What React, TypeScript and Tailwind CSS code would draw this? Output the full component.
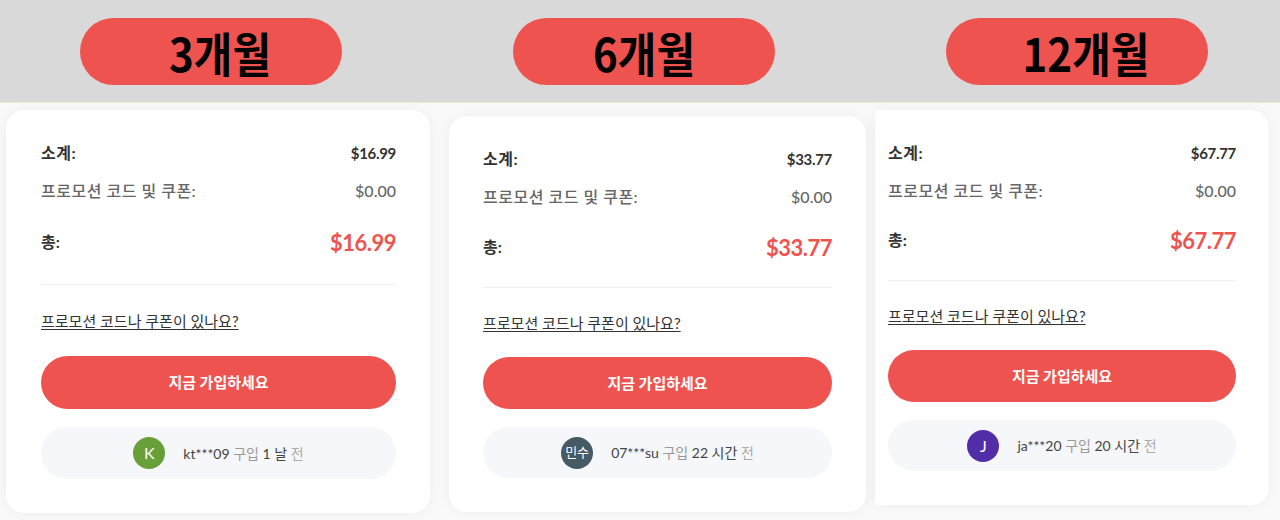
const plans = [
  {
    sub: '$16.99',
    avatar: 'K',
    avatarBg: 'bg-[#689f38]',
    user: 'kt***09',
    when: '1 날',
  },
  {
    sub: '$33.77',
    avatar: '민수',
    avatarBg: 'bg-[#455a64]',
    user: '07***su',
    when: '22 시간',
  },
  {
    sub: '$67.77',
    avatar: 'J',
    avatarBg: 'bg-[#512da8]',
    user: 'ja***20',
    when: '20 시간',
  },
];

type Plan = (typeof plans)[number];

// card 1 was captured a touch larger than the other two
const spacing = {
  loose: {
    total: 'mt-[26px]',
    line: 'mt-[27px]',
    link: 'mt-[26px]',
    button: 'mt-[25px] h-[53px]',
    pill: 'mt-[18px] h-[52px]',
  },
  normal: {
    total: 'mt-[25px]',
    line: 'mt-[25px]',
    link: 'mt-[25px]',
    button: 'mt-[24px] h-[52px]',
    pill: 'mt-[18px] h-[51px]',
  },
  tight: {
    total: 'mt-[24px]',
    line: 'mt-[25px]',
    link: 'mt-[25px]',
    button: 'mt-[24px] h-[52px]',
    pill: 'mt-[18px] h-[51px]',
  },
};

function Label({ text, className }: { text: string; className: string }) {
  return (
    <div className={`flex h-[67px] w-[262px] items-center justify-center rounded-full bg-[#ef5350] ${className}`}>
      <span className="inline-block scale-y-110 font-['Noto_Sans_CJK_KR',sans-serif] text-[42px] font-bold leading-none text-black">
        {text}
      </span>
    </div>
  );
}

function Card({ plan, size, className }: { plan: Plan; size: keyof typeof spacing; className: string }) {
  const s = spacing[size];
  const small = plan.avatar.length > 1;
  return (
    <div className={`bg-white pt-[33px] pb-[34px] shadow-[0_0_14px_rgba(0,0,0,0.05)] ${className}`}>
      <div className="flex h-[20px] items-center justify-between font-bold text-[#333]">
        <span className="text-[16px] tracking-[0.5px]">소계:</span>
        <span className="text-[15px] tracking-[-0.3px]">{plan.sub}</span>
      </div>
      <div className="mt-[18px] flex h-[20px] items-center justify-between font-medium text-[#666]">
        <span className="text-[16px] tracking-[0.5px]">프로모션 코드 및 쿠폰:</span>
        <span className="text-[16px]">$0.00</span>
      </div>
      <div className={`flex h-[30px] items-center justify-between ${s.total}`}>
        <span className="text-[16px] font-bold text-[#333]">총:</span>
        <span className="text-[22px] font-bold tracking-[-0.5px] text-[#ef5350]">{plan.sub}</span>
      </div>
      <div className={`h-px bg-[#f0f0f0] ${s.line}`} />
      <div className={`flex h-[20px] items-center ${s.link}`}>
        <a href="#" className="text-[15px] text-[#333] underline underline-offset-2">
          프로모션 코드나 쿠폰이 있나요?
        </a>
      </div>
      <button className={`flex w-full items-center justify-center rounded-full bg-[#ef5350] text-[15px] font-bold text-white ${s.button}`}>
        지금 가입하세요
      </button>
      <div className={`flex items-center justify-center gap-[18px] rounded-full bg-[#f5f7fb] ${s.pill}`}>
        <div className={`flex h-[32px] w-[32px] items-center justify-center rounded-full text-white ${plan.avatarBg} ${small ? 'text-[13px]' : 'text-[16px]'}`}>
          {plan.avatar}
        </div>
        <div className="text-[14px] text-[#444]">
          {plan.user} <span className="text-[#999]">구입</span> {plan.when} <span className="text-[#aaa]">전</span>
        </div>
      </div>
    </div>
  );
}

export default function App() {
  return (
    <div className="h-[520px] w-[1280px] overflow-hidden bg-[#f9f9f9] font-[Lato,'Noto_Sans_CJK_KR',sans-serif]">
      <div className="flex h-[103px] items-start border-b border-[#e6efcf] bg-[#d9d9d9] pt-[18px]">
        <Label text="3개월" className="ml-[80px] pl-[18px]" />
        <Label text="6개월" className="ml-[171px]" />
        <Label text="12개월" className="ml-[171px] pl-[18px]" />
      </div>
      <div className="flex">
        <div className="w-[440px]">
          <Card plan={plans[0]} size="loose" className="mt-[7px] ml-[6px] w-[424px] rounded-[18px] pl-[35px] pr-[34px]" />
        </div>
        <div className="w-[434px]">
          <Card plan={plans[1]} size="normal" className="mt-[13px] ml-[9px] w-[417px] rounded-[18px] px-[34px]" />
        </div>
        <div className="w-[406px]">
          <Card plan={plans[2]} size="tight" className="mt-[7px] ml-[1px] w-[394px] rounded-r-[18px] pl-[13px] pr-[33px]" />
        </div>
      </div>
    </div>
  );
}
